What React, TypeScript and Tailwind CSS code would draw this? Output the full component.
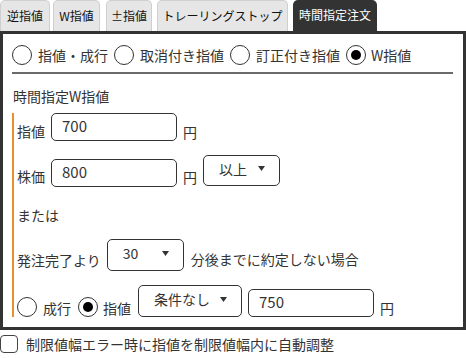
import React from "react";

const FONT = '"Noto Sans CJK JP", "Noto Sans", sans-serif';

function Radio({ checked }: { checked?: boolean }) {
  return (
    <span className="w-[20px] h-[20px] rounded-full border border-[#333] bg-white flex items-center justify-center shrink-0">
      {checked && <span className="w-[10px] h-[10px] rounded-full bg-black" />}
    </span>
  );
}

function Arrow() {
  return (
    <svg width="7" height="5" viewBox="0 0 7 5" className="shrink-0">
      <path d="M0 0 L7 0 L3.5 5 Z" fill="#333" />
    </svg>
  );
}

function Select({ label, w, h }: { label: string; w: string; h: string }) {
  return (
    <div
      className={`${w} ${h} border border-[#333] rounded-[5px] bg-white flex items-center justify-between pl-[15px] pr-[14px] pb-[4px] shrink-0`}
    >
      <span className="text-[14px] leading-[20px] text-[#333]">{label}</span>
      <Arrow />
    </div>
  );
}

function Input({ value }: { value: string }) {
  return (
    <div className="w-[126px] h-[28px] border border-[#333] rounded-[5px] bg-white flex items-center pl-[10px] pb-[3px] shrink-0">
      <span className="text-[15px] leading-[20px] text-[#333]">{value}</span>
    </div>
  );
}

export default function App() {
  const tabs = [
    { t: "逆指値", cls: "w-[50px]" },
    { t: "W指値", cls: "w-[47px] ml-[3px]" },
    { t: "±指値", cls: "w-[46px] ml-[6px]" },
    { t: "トレーリングストップ", cls: "w-[131px] ml-[5px]" },
  ];
  return (
    <div
      className="w-[466px] h-[358px] bg-white text-[#333] flex flex-col"
      style={{ fontFamily: FONT }}
    >
      {/* tabs */}
      <div className="h-[31px] flex items-end">
        {tabs.map((tb) => (
          <div
            key={tb.t}
            className={`${tb.cls} h-[31px] rounded-t-[5px] border border-b-0 border-[#cfcfcf] bg-[#e6e6e6] flex items-center justify-center text-[12px] leading-[16px] text-[#111] pb-[1px]`}
          >
            {tb.t}
          </div>
        ))}
        <div className="w-[84px] ml-[5px] h-[31px] rounded-t-[5px] bg-[#333] flex items-center justify-center text-[12px] leading-[16px] text-white pb-[1px]">
          時間指定注文
        </div>
      </div>

      {/* panel */}
      <div className="h-[299px] border-[3px] border-[#333] pl-[9px] pr-[10px] pt-[11px] pb-[10px] flex flex-col">
        <div className="flex items-center h-[20px] text-[14px] leading-[20px]">
          <Radio />
          <span className="ml-[6px]">指値・成行</span>
          <span className="ml-[6px]"><Radio /></span>
          <span className="ml-[6px]">取消付き指値</span>
          <span className="ml-[6px]"><Radio /></span>
          <span className="ml-[6px]">訂正付き指値</span>
          <span className="ml-[6px]"><Radio checked /></span>
          <span className="ml-[5px]">W指値</span>
        </div>
        <div className="mt-[7px] h-[2px] bg-[#6a6a6a]" />
        <div className="mt-[12px] text-[14px] leading-[20px] pl-[1px]">時間指定W指値</div>

        <div className="mt-[7px] border-l-2 border-[#e8902c] pl-[3px] flex flex-col text-[14px] leading-[20px]">
          {/* row 1 */}
          <div className="flex items-start h-[28px]">
            <span className="mt-[8px]">指値</span>
            <span className="ml-[6px]"><Input value="700" /></span>
            <span className="ml-[6px] mt-[9px]">円</span>
          </div>
          {/* row 2 */}
          <div className="flex items-start h-[32px] mt-[14px]">
            <span className="mt-[11px]">株価</span>
            <span className="ml-[6px] mt-[4px]"><Input value="800" /></span>
            <span className="ml-[6px] mt-[12px]">円</span>
            <span className="ml-[6px]"><Select label="以上" w="w-[77px]" h="h-[31px]" /></span>
          </div>
          {/* row 3 */}
          <div className="mt-[18px]">または</div>
          {/* row 4 */}
          <div className="flex items-start h-[32px] mt-[14px]">
            <span className="mt-[11px]">発注完了より</span>
            <span className="ml-[6px]"><Select label="30" w="w-[77px]" h="h-[32px]" /></span>
            <span className="ml-[7px] mt-[10px]">分後までに約定しない場合</span>
          </div>
          {/* row 5 */}
          <div className="flex items-end h-[32px] mt-[14px]">
            <Radio />
            <span className="ml-[6px] mb-[-1px]">成行</span>
            <span className="ml-[7px]"><Radio checked /></span>
            <span className="ml-[5px] mb-[-1px]">指値</span>
            <span className="ml-[7px]"><Select label="条件なし" w="w-[104px]" h="h-[32px]" /></span>
            <span className="ml-[6px]"><Input value="750" /></span>
            <span className="ml-[6px] mb-[-1px]">円</span>
          </div>
        </div>
      </div>

      {/* checkbox */}
      <div className="flex items-center h-[28px] text-[14px] leading-[20px]">
        <span className="w-[18px] h-[18px] rounded-[4px] border border-[#444] bg-white shrink-0" />
        <span className="ml-[8px]">制限値幅エラー時に指値を制限値幅内に自動調整</span>
      </div>
    </div>
  );
}
